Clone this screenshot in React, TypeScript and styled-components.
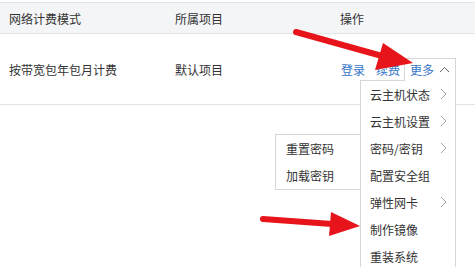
import React from "react"
import styled, { createGlobalStyle } from "styled-components"

const GlobalStyle = createGlobalStyle`
  html, body {
    margin: 0;
    padding: 0;
    background: #fff;
    overflow: hidden;
  }
  body {
    font-family: "Noto Sans CJK SC", "Noto Sans", sans-serif;
    font-size: 12px;
    color: #333;
  }
`

const Page = styled.div`
  position: relative;
  width: 475px;
  height: 267px;
  padding-top: 2px;
  box-sizing: border-box;
`

const Table = styled.div`
  width: 100%;
`

const Row = styled.div<{ $head?: boolean }>`
  display: grid;
  grid-template-columns: 166px 165px 1fr;
  align-items: center;
  padding-left: 9px;
  height: ${(p) => (p.$head ? "30px" : "70px")};
  background: ${(p) => (p.$head ? "#f4f5f7" : "#fff")};
  border-top: ${(p) => (p.$head ? "1px solid #e3e4e6" : "none")};
  border-bottom: 1px solid #e3e4e6;
  color: #333;
`

const Cell = styled.div`
  display: flex;
  align-items: center;
  white-space: nowrap;
`

const Link = styled.span`
  color: #3575c8;
  margin-right: 11px;
  &:first-child {
    margin-left: 1px;
  }
`

const More = styled.div`
  position: relative;
  margin-left: -7px;
`

const MoreButton = styled.div`
  position: relative;
  z-index: 2;
  display: flex;
  align-items: center;
  gap: 5px;
  height: 22px;
  padding: 0 5px;
  background: #fff;
  border: 1px solid #d6d6d6;
  border-bottom: none;
  color: #3575c8;
`

const Dropdown = styled.div`
  position: absolute;
  z-index: 1;
  top: calc(100% - 1px);
  right: 0;
  width: 94px;
  background: #fff;
  border: 1px solid #d6d6d6;
`

const Item = styled.div`
  position: relative;
  display: flex;
  align-items: center;
  justify-content: space-between;
  height: 27px;
  padding: 0 8px 0 9px;
  color: #333;
`

const SubMenu = styled.div`
  position: absolute;
  top: -1px;
  right: 100%;
  width: 84px;
  background: #fff;
  border: 1px solid #d6d6d6;
`

const SubItem = styled.div`
  display: flex;
  align-items: center;
  height: 27px;
  padding-left: 10px;
  color: #333;
`

const Overlay = styled.svg`
  position: absolute;
  left: 0;
  top: 0;
  pointer-events: none;
  z-index: 5;
`

const ChevronRight = () => (
  <svg width="7" height="12" viewBox="0 0 7 12">
    <polyline points="1,1 6,6 1,11" fill="none" stroke="#a8a8a8" strokeWidth="1" />
  </svg>
)

const ChevronUp = () => (
  <svg width="11" height="7" viewBox="0 0 11 7">
    <polyline points="1,6 5.5,1.5 10,6" fill="none" stroke="#666" strokeWidth="1" />
  </svg>
)

const menu = [
  { label: "云主机状态", sub: true },
  { label: "云主机设置", sub: true },
  { label: "密码/密钥", sub: true, open: true },
  { label: "配置安全组" },
  { label: "弹性网卡", sub: true },
  { label: "制作镜像" },
  { label: "重装系统" },
]

const App = () => {
  return (
    <Page>
      <GlobalStyle />
      <Table>
        <Row $head>
          <Cell>网络计费模式</Cell>
          <Cell>所属项目</Cell>
          <Cell>操作</Cell>
        </Row>
        <Row>
          <Cell>按带宽包年包月计费</Cell>
          <Cell>默认项目</Cell>
          <Cell>
            <Link>登录</Link>
            <Link>续费</Link>
            <More>
              <MoreButton>
                更多
                <ChevronUp />
              </MoreButton>
              <Dropdown>
                {menu.map((m) => (
                  <Item key={m.label}>
                    {m.label}
                    {m.sub && <ChevronRight />}
                    {m.open && (
                      <SubMenu>
                        <SubItem>重置密码</SubItem>
                        <SubItem>加载密钥</SubItem>
                      </SubMenu>
                    )}
                  </Item>
                ))}
              </Dropdown>
            </More>
          </Cell>
        </Row>
      </Table>
      <Overlay width="475" height="267" viewBox="0 0 475 267">
        <line x1="296" y1="32" x2="382" y2="56" stroke="#e8141b" strokeWidth="6" strokeLinecap="round" />
        <polygon points="383,43 413,63 375,70" fill="#e8141b" />
        <line x1="263" y1="219" x2="332" y2="224" stroke="#e8141b" strokeWidth="6" strokeLinecap="round" />
        <polygon points="331,212 360,226 329,236" fill="#e8141b" />
      </Overlay>
    </Page>
  )
}

export default App
